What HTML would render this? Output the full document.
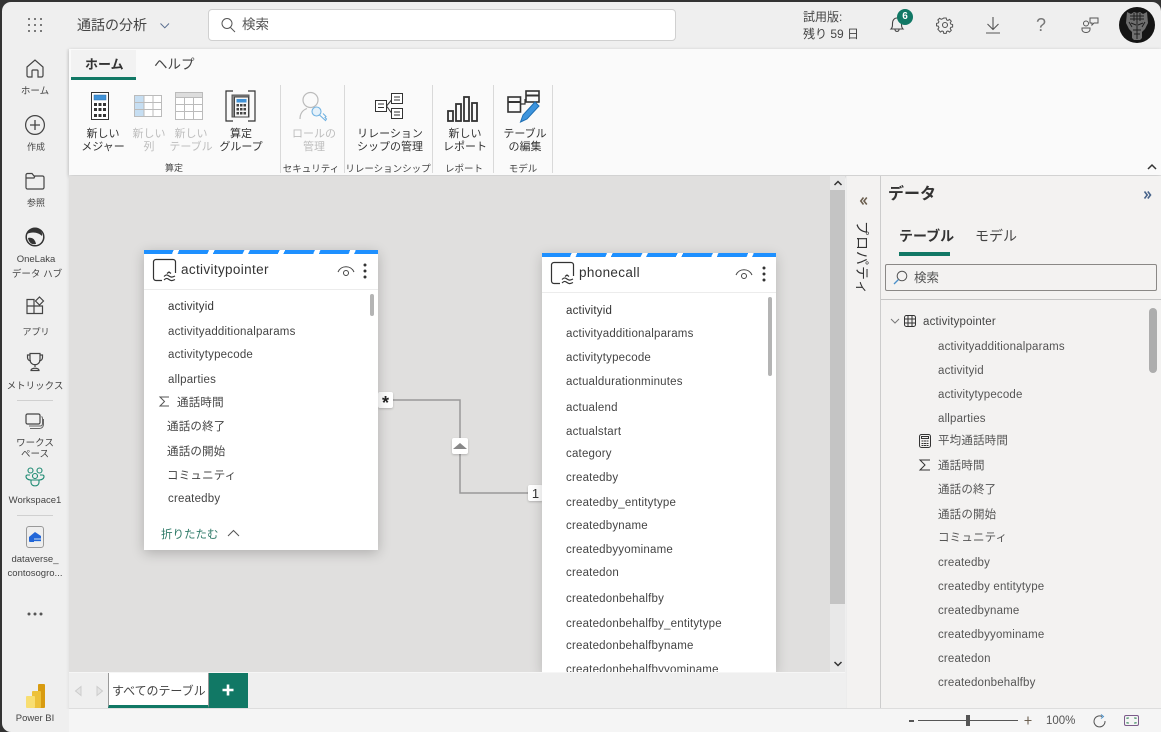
<!DOCTYPE html>
<html lang="ja"><head><meta charset="utf-8"><title>通話の分析</title>
<style>
*{box-sizing:border-box}
html,body{margin:0;padding:0;width:1161px;height:732px;overflow:hidden;background:#333}
body{font-family:"Liberation Sans","Noto Sans CJK JP",sans-serif;color:#333}
.a{position:absolute}
.t{position:absolute;white-space:nowrap;line-height:14px}
.c{text-align:center;transform:translateX(-50%)}
svg{position:absolute;overflow:visible}
#app{position:absolute;left:2px;top:2px;width:1159px;height:730px;background:#efefef;border-radius:9px 9px 0 9px;overflow:hidden}
#root{position:absolute;left:-2px;top:-2px;width:1161px;height:732px}
.nav{font-size:9.5px;color:#444}
.rb{font-size:11px;color:#333;line-height:13px;text-align:center;transform:translateX(-50%);position:absolute;white-space:nowrap}
.dis{color:#bdbdbd}
.grp{font-size:9.5px;color:#444;position:absolute;white-space:nowrap;transform:translateX(-50%)}
.sep{position:absolute;top:85px;height:88px;width:1px;background:#d9d9d9}
.f{position:absolute;white-space:nowrap;font-size:11.5px;line-height:14px;color:#444;letter-spacing:.2px;margin-top:1px}
.d{position:absolute;white-space:nowrap;font-size:11.5px;line-height:14px;color:#555;letter-spacing:.17px;margin-top:1px}
.card{position:absolute;background:#fff;box-shadow:0 3px 12px rgba(0,0,0,.22);overflow:hidden}
.stripe{position:absolute;left:0;right:0;top:0;height:4px;background:repeating-linear-gradient(115deg,#1e90ff 0 27px,#fff 27px 32px)}
</style></head><body>
<div id="app"><div id="root">

<!-- top bar -->
<svg style="left:28px;top:18px" width="16" height="16"><g fill="#555"><circle cx="1" cy="1" r="1"/><circle cx="7" cy="1" r="1"/><circle cx="13" cy="1" r="1"/><circle cx="1" cy="7" r="1"/><circle cx="7" cy="7" r="1"/><circle cx="13" cy="7" r="1"/><circle cx="1" cy="13" r="1"/><circle cx="7" cy="13" r="1"/><circle cx="13" cy="13" r="1"/></g></svg>
<div class="t" style="left:77px;top:18px;font-size:14px;color:#444">通話の分析</div>
<svg style="left:160px;top:23px" width="10" height="6"><path d="M.5.5l4.300 4.300L9 .5" fill="none" stroke="#5a6f90" stroke-width="1"/></svg>
<div class="a" style="left:208px;top:9px;width:468px;height:32px;background:#fff;border:1px solid #d0d0d0;border-radius:4px"></div>
<svg style="left:220px;top:17px" width="16" height="16"><circle cx="7" cy="6.500" r="5" fill="none" stroke="#555" stroke-width="1"/><path d="M10.500 10.500l4.500 4.500" stroke="#555" stroke-width="1"/></svg>
<div class="t" style="left:242px;top:18px;font-size:13.500px;color:#555">検索</div>

<div class="t" style="left:803px;top:10px;font-size:12px;color:#444">試用版:</div>
<div class="t" style="left:803px;top:27px;font-size:12px;color:#444">残り 59 日</div>
<svg style="left:889px;top:16px" width="17" height="18"><path d="M2 13c1.500-1.500 1.500-3 1.500-5.500C3.500 4 5.500 2 8 2s4.500 2 4.500 5.500c0 2.500 0 4 1.500 5.500z M6 13.500c0 2.500 4 2.500 4 0" fill="none" stroke="#444" stroke-width="1.100"/></svg>
<div class="a" style="left:897px;top:9px;width:16px;height:16px;border-radius:50%;background:#117865;color:#fff;font-size:10px;line-height:16px;text-align:center;font-weight:bold">6</div>
<svg style="left:936px;top:16px" width="18" height="18" viewBox="0 0 18 18"><path d="M7.500 1h3l.5 2.300 1.600.7 2-1.300 2.100 2.100-1.300 2 .7 1.600 2.200.5v3l-2.200.5-.7 1.600 1.300 2-2.100 2.100-2-1.300-1.600.7-.5 2.200h-3l-.5-2.200-1.600-.7-2 1.300L.3 14.600l1.300-2-.7-1.600L-1.300 10.500v-3l2.200-.5.700-1.600-1.300-2 2.100-2.100 2 1.300 1.600-.7z" transform="translate(1.600 1.200) scale(.82)" fill="none" stroke="#555" stroke-width="1.250"/><circle cx="9" cy="9" r="2.500" fill="none" stroke="#555" stroke-width="1.100"/></svg>
<svg style="left:985px;top:16px" width="16" height="18"><path d="M8 1v12M2.500 8L8 13.500 13.500 8M1 17h14" fill="none" stroke="#555" stroke-width="1.100"/></svg>
<div class="t" style="left:1036px;top:16px;font-size:18px;line-height:18px;color:#777">?</div>
<svg style="left:1081px;top:16px" width="18" height="18"><circle cx="5" cy="7.500" r="2.500" fill="none" stroke="#555"/><path d="M1 12h8v1.500c0 4-8 4-8 0z" fill="none" stroke="#555"/><path d="M9 2h8v5h-4l-2 2V7H9z" fill="none" stroke="#555"/></svg>
<div class="a" style="left:1119px;top:7px;width:36px;height:36px;border-radius:50%;background:#141414"></div>
<svg style="left:1119px;top:7px" width="36" height="36"><path d="M8 5l4 2 3-2 3 1 3-1 3 2 4-2 1 11-3 6-3 3v6l-2 2h-6l-2-2v-6l-3-3-3-6z" fill="#6f6f6f"/><path d="M11 9h14M11 12h14M18 6v26M12 16l5 2M24 16l-5 2M14 23h8M15 27h6M15 6v8M21 6v8M10 15l3 5M26 15l-3 5" stroke="#1f1f1f" stroke-width="1" fill="none"/></svg>

<!-- left nav -->
<div class="a" style="left:66px;top:49px;width:3px;height:660px;background:linear-gradient(90deg,#efefef,#e4e4e4)"></div>
<svg style="left:25px;top:58px" width="20" height="20"><path d="M2 9l8-7 8 7v8.500a1.500 1.500 0 0 1-1.500 1.500H13v-6a1 1 0 0 0-1-1H8a1 1 0 0 0-1 1v6H3.500A1.500 1.500 0 0 1 2 17.500z" fill="none" stroke="#444" stroke-width="1.200"/></svg>
<div class="t nav c" style="left:35px;top:84px;margin-top:1px">ホーム</div>
<svg style="left:25px;top:115px" width="20" height="20"><circle cx="10" cy="10" r="9.400" fill="none" stroke="#444" stroke-width="1.200"/><path d="M10 5v10M5 10h10" stroke="#444" stroke-width="1.300"/></svg>
<div class="t nav c" style="left:36px;top:140px;font-size:9px">作成</div>
<svg style="left:25px;top:172px" width="20" height="18"><path d="M1 3a1.500 1.500 0 0 1 1.500-1.500H7L9 4h8.500A1.500 1.500 0 0 1 19 5.500v10a1.500 1.500 0 0 1-1.500 1.500h-15A1.500 1.500 0 0 1 1 15.500zM1 6h8l1-2" fill="none" stroke="#444" stroke-width="1.200"/></svg>
<div class="t nav c" style="left:36px;top:196px;font-size:9px">参照</div>
<svg style="left:25px;top:227px" width="20" height="20"><circle cx="10" cy="10" r="8.800" fill="none" stroke="#333" stroke-width="1.500"/><path d="M2 7c2-4 6-6 9-6 4 1 7 5 6 8-3-3-9-5-15-2z" fill="#333"/><path d="M3 11c4-1 7 1 8 6-4 1-7-1-8-6z" fill="#333"/></svg>
<div class="t nav c" style="left:36px;top:253px">OneLaka</div>
<div class="t nav c" style="left:37px;top:268px">データ ハブ</div>
<svg style="left:25px;top:296px" width="20" height="20"><path d="M2 3.500h7v6.500H2zM2 10h7v7.500H2zM9 10h8.500v7.500H9z" fill="none" stroke="#444" stroke-width="1.200"/><path d="M14.500 1l4 4-4 4-4-4z" fill="none" stroke="#444" stroke-width="1.200"/></svg>
<div class="t nav c" style="left:36px;top:325px;font-size:9px">アプリ</div>
<svg style="left:25px;top:352px" width="20" height="20"><path d="M5 1.500h10v6c0 7-10 7-10 0zM5 3H2.500v2.500C2.500 7.500 4 9 6 9M15 3h2.500v2.500C17.500 7.500 16 9 14 9M10 12v3M6 18.500c0-3 8-3 8 0z" fill="none" stroke="#444" stroke-width="1.200"/></svg>
<div class="t nav c" style="left:35px;top:380px">メトリックス</div>
<div class="a" style="left:17px;top:400px;width:36px;height:1px;background:#d0d0d0"></div>
<svg style="left:25px;top:413px" width="20" height="18"><rect x="1" y="1" width="14" height="10" rx="1.500" fill="none" stroke="#444" stroke-width="1.200"/><path d="M16.500 3.500c1 .5 1 1 1 2v5c0 1.500-1 2.500-2.500 2.500H4M18.500 6v5.500c0 2-1.500 4-4 4H5" fill="none" stroke="#666" stroke-width="1"/></svg>
<div class="t nav c" style="left:35px;top:439px;line-height:10.500px;text-align:center">ワークス<br>ペース</div>
<svg style="left:25px;top:467px" width="21" height="20" fill="none" stroke="#1d8a72" stroke-width="1.100"><circle cx="5.500" cy="3.500" r="2.500"/><circle cx="14.500" cy="3.500" r="2.500"/><circle cx="10" cy="9" r="2.500"/><path d="M6 13h8v2.500c0 4.500-8 4.500-8 0zM5 8H2.500A1.500 1.500 0 0 0 1 9.500C1 11.500 3 13 6 13M15 8h2.500A1.500 1.500 0 0 1 19 9.500C19 11.500 17 13 14 13"/></svg>
<div class="t nav c" style="left:35px;top:494px">Workspace1</div>
<div class="a" style="left:17px;top:515px;width:36px;height:1px;background:#d0d0d0"></div>
<div class="a" style="left:26px;top:526px;width:18px;height:22px;border-radius:3px;background:#eee;border:1px solid #999"></div>
<svg style="left:28px;top:531px" width="15" height="14"><path d="M1 6l6-5 6 4v6H2a1 1 0 0 1-1-1z" fill="#2266d8"/><path d="M6 8h7M6 10.500h7" stroke="#cde" stroke-width="1"/></svg>
<div class="t nav c" style="left:35px;top:553px">dataverse_</div>
<div class="t nav c" style="left:35px;top:567px">contosogro...</div>
<svg style="left:27px;top:612px" width="16" height="4"><g fill="#555"><circle cx="2" cy="2" r="1.500"/><circle cx="8" cy="2" r="1.500"/><circle cx="14" cy="2" r="1.500"/></g></svg>
<svg style="left:26px;top:684px" width="19" height="25"><rect x="12" y="0" width="7" height="24" rx="1" fill="#d89b10"/><rect x="6" y="7" width="9" height="17" rx="1" fill="#edc13a"/><rect x="0" y="12" width="9" height="12" rx="1" fill="#f8de72"/></svg>
<div class="t nav c" style="left:35px;top:712px">Power BI</div>

<!-- ribbon -->
<div class="a" style="left:69px;top:49px;width:1092px;height:126px;background:#fafafa;box-shadow:0 1px 4px rgba(0,0,0,.2)"></div>
<div class="a" style="left:71px;top:50px;width:65px;height:30px;background:#f2f2f2"></div>
<div class="t" style="left:85px;top:58px;font-size:13px;font-weight:bold;color:#333">ホーム</div>
<div class="a" style="left:71px;top:77px;width:65px;height:3px;background:#117865"></div>
<div class="t" style="left:154px;top:58px;font-size:13.500px;color:#444">ヘルプ</div>

<svg style="left:91px;top:92px" width="18" height="28"><rect x=".5" y=".5" width="17" height="27" fill="#fff" stroke="#333"/><rect x="3" y="3" width="12" height="5" fill="#3f92d8" stroke="#2d6ca3" stroke-width=".5"/><g fill="#333"><rect x="3" y="11" width="3" height="3"/><rect x="7.500" y="11" width="3" height="3"/><rect x="12" y="11" width="3" height="3"/><rect x="3" y="16" width="3" height="3"/><rect x="7.500" y="16" width="3" height="3"/><rect x="12" y="16" width="3" height="3"/><rect x="3" y="22" width="3" height="3"/><rect x="7.500" y="22" width="3" height="3"/><rect x="12" y="22" width="3" height="3"/></g></svg>
<div class="rb" style="left:103px;top:127px;margin-top:1px">新しい<br>メジャー</div>
<svg style="left:134px;top:95px" width="28" height="22"><rect x=".5" y=".5" width="27" height="21" fill="#fff" stroke="#bbb"/><rect x="1" y="1" width="9" height="20" fill="#c6def2"/><path d="M10 .5v21M19 .5v21M.5 7.500h27M.5 14.500h27" stroke="#bbb"/></svg>
<div class="rb dis" style="left:149px;top:127px;margin-top:1px">新しい<br>列</div>
<svg style="left:175px;top:92px" width="28" height="28"><rect x=".5" y=".5" width="27" height="27" fill="#fff" stroke="#bbb"/><rect x="1" y="1" width="26" height="4" fill="#ddd"/><path d="M9.500 5v22M18.500 5v22M.5 5.500h27M.5 12.500h27M.5 19.500h27" stroke="#bbb"/></svg>
<div class="rb dis" style="left:191px;top:127px;margin-top:1px">新しい<br>テーブル</div>
<svg style="left:225px;top:90px" width="31" height="32"><path d="M8 1H1v30h7M23 1h7v30h-7" fill="none" stroke="#333" stroke-width="1.200"/><rect x="7" y="5" width="17" height="22" fill="#888" stroke="#555"/><rect x="9.500" y="7" width="14" height="20" fill="#f5f5f5" stroke="#444"/><rect x="11.500" y="9" width="10" height="3.500" fill="#3f92d8"/><g fill="#444"><rect x="11.500" y="14" width="2.500" height="2.500"/><rect x="15" y="14" width="2.500" height="2.500"/><rect x="18.500" y="14" width="2.500" height="2.500"/><rect x="11.500" y="18" width="2.500" height="2.500"/><rect x="15" y="18" width="2.500" height="2.500"/><rect x="18.500" y="18" width="2.500" height="2.500"/><rect x="11.500" y="22" width="2.500" height="2.500"/><rect x="15" y="22" width="2.500" height="2.500"/><rect x="18.500" y="22" width="2.500" height="2.500"/></g></svg>
<div class="rb" style="left:241px;top:127px;margin-top:1px">算定<br>グループ</div>
<div class="grp" style="left:174px;top:161px;font-size:9px">算定</div>
<div class="sep" style="left:280px"></div>

<svg style="left:299px;top:91px" width="30" height="30" fill="none"><circle cx="11.500" cy="9" r="7.500" stroke="#bbb" stroke-width="1.200"/><path d="M1 28c0-6 3-9 7-10.500" stroke="#bbb" stroke-width="1.200"/><circle cx="17.500" cy="20.500" r="4.500" fill="#e5f1fa" stroke="#72b3e2" stroke-width="1.100"/><path d="M20.500 24l6 5.500 1-1.500-1.500-1.500 1-1-3-3" stroke="#72b3e2" stroke-width="1.100"/></svg>
<div class="rb dis" style="left:314px;top:127px;margin-top:1px">ロールの<br>管理</div>
<div class="grp" style="left:311px;top:161px">セキュリティ</div>
<div class="sep" style="left:344px"></div>

<svg style="left:375px;top:92px" width="29" height="28" fill="#fff" stroke="#333"><rect x=".5" y="8.500" width="11" height="11"/><rect x="16.500" y="1.500" width="11" height="10"/><rect x="16.500" y="16.500" width="11" height="10"/><path d="M11.500 14l5-6M11.500 14l5 7M3 12h6M3 15.500h6M19 5h6M19 8h6M19 20h6M19 23h6" fill="none"/></svg>
<div class="rb" style="left:390px;top:127px;margin-top:1px">リレーション<br>シップの管理</div>
<div class="grp" style="left:388px;top:161px">リレーションシップ</div>
<div class="sep" style="left:432px"></div>

<svg style="left:447px;top:96px" width="31" height="26" fill="none" stroke="#333" stroke-width="1.800"><rect x="1" y="15" width="5" height="10"/><rect x="9" y="8" width="5" height="17"/><rect x="17" y="1" width="5" height="24"/><rect x="25" y="7" width="5" height="18"/></svg>
<div class="rb" style="left:465px;top:127px;margin-top:1px">新しい<br>レポート</div>
<div class="grp" style="left:464px;top:161px">レポート</div>
<div class="sep" style="left:493px"></div>

<svg style="left:507px;top:90px" width="34" height="33" fill="none"><rect x="1" y="7" width="12.500" height="15" stroke="#333" stroke-width="1.600"/><path d="M1 12h12.500" stroke="#333" stroke-width="2"/><path d="M13.500 14H18V9" stroke="#333" stroke-width="1.200"/><rect x="19" y="1" width="13" height="11" stroke="#333" stroke-width="1.600"/><path d="M19 5.500h13" stroke="#333" stroke-width="2"/><path d="M13.500 32l2.500-7 12-13 4 4-12 13z" fill="#3d94dd" stroke="#1f6fb3"/></svg>
<div class="rb" style="left:525px;top:127px;margin-top:1px">テーブル<br>の編集</div>
<div class="grp" style="left:523px;top:161px">モデル</div>
<div class="sep" style="left:552px"></div>
<svg style="left:1147px;top:163px" width="10" height="7"><path d="M1 6l4-4 4 4" fill="none" stroke="#333" stroke-width="1.500"/></svg>

<!-- canvas -->
<div class="a" style="left:69px;top:176px;width:761px;height:496px;background:#e0dfde"></div>
<div class="a" style="left:830px;top:176px;width:15px;height:496px;background:#e8e8e8"></div>
<div class="a" style="left:830px;top:190px;width:15px;height:414px;background:#c4c4c4"></div>
<svg style="left:834px;top:180px" width="8" height="6"><path d="M.5 5L4 1.500 7.500 5" fill="none" stroke="#333" stroke-width="1.500"/></svg>
<svg style="left:834px;top:661px" width="8" height="6"><path d="M.5 1L4 4.500 7.500 1" fill="none" stroke="#333" stroke-width="1.500"/></svg>

<!-- relationship -->
<svg style="left:0;top:0" width="1161" height="732"><path d="M392 400h68v93h70" fill="none" stroke="#999" stroke-width="1.500"/></svg>
<div class="a" style="left:378px;top:392px;width:15px;height:16px;background:#fff;border-radius:2px;box-shadow:0 1px 2px rgba(0,0,0,.2);font-size:18px;line-height:22px;text-align:center;color:#222;font-weight:bold">*</div>
<div class="a" style="left:452px;top:438px;width:16px;height:16px;background:#fff;border-radius:2px;box-shadow:0 1px 2px rgba(0,0,0,.2)"></div>
<svg style="left:453px;top:443px" width="14" height="7"><path d="M7 0l7 6H0z" fill="#888"/></svg>
<div class="a" style="left:528px;top:485px;width:15px;height:16px;background:#fff;border-radius:2px;box-shadow:0 1px 2px rgba(0,0,0,.2);font-size:13px;line-height:17px;text-align:center;color:#333">1</div>

<!-- card 1 -->
<div class="card" style="left:144px;top:250px;width:234px;height:300px">
<div class="stripe"></div>
<div class="a" style="left:0;top:39px;width:234px;height:1px;background:#ececec"></div>
<svg style="left:9px;top:9px" width="24" height="23" fill="none" stroke="#333" stroke-width="1.200"><path d="M9 21.500H3A2.500 2.500 0 0 1 .5 19V3A2.500 2.500 0 0 1 3 .5h17A2.500 2.500 0 0 1 22.500 3v11"/><path d="M11 17.500c2-2 3-2 5-.5s3 1.500 6 0M11 21c2-2 3-2 5-.5s3 1.500 6 0M14 14.500l2-1.500 2 1.500"/></svg>
<div class="t" style="left:37px;top:12px;font-size:13.500px;line-height:16px;color:#333;letter-spacing:.35px">activitypointer</div>
<svg style="left:193px;top:15px" width="18" height="12" fill="none" stroke="#444"><path d="M1 7c3-7 13-7 16 0" stroke-width="1"/><circle cx="9" cy="8" r="2.500"/></svg>
<svg style="left:219px;top:13px" width="4" height="16" fill="#333"><circle cx="2" cy="2" r="1.500"/><circle cx="2" cy="8" r="1.500"/><circle cx="2" cy="14" r="1.500"/></svg>
<div class="a" style="left:226px;top:44px;width:4px;height:22px;background:#b4b4b4;border-radius:2px"></div>
<div class="f" style="left:24px;top:49px;color:#333">activityid</div>
<div class="f" style="left:24px;top:74px">activityadditionalparams</div>
<div class="f" style="left:24px;top:97px">activitytypecode</div>
<div class="f" style="left:24px;top:122px">allparties</div>
<svg style="left:15px;top:146px" width="11" height="11" fill="none" stroke="#555"><path d="M10 1H1l4.500 4.500L1 10h9"/></svg>
<div class="f" style="left:33px;top:145px">通話時間</div>
<div class="f" style="left:23px;top:169px">通話の終了</div>
<div class="f" style="left:23px;top:194px">通話の開始</div>
<div class="f" style="left:23px;top:218px">コミュニティ</div>
<div class="f" style="left:24px;top:241px">createdby</div>
<div class="t" style="left:17px;top:278px;font-size:11.500px;color:#2f7a68">折りたたむ</div>
<svg style="left:83px;top:279px" width="13" height="8"><path d="M1 7l5.500-5.500L12 7" fill="none" stroke="#555"/></svg>
</div>

<!-- card 2 -->
<div class="card" style="left:542px;top:253px;width:234px;height:419px;box-shadow:0 3px 12px rgba(0,0,0,.18)">
<div class="stripe"></div>
<div class="a" style="left:0;top:39px;width:234px;height:1px;background:#ececec"></div>
<svg style="left:9px;top:9px" width="24" height="23" fill="none" stroke="#333" stroke-width="1.200"><path d="M9 21.500H3A2.500 2.500 0 0 1 .5 19V3A2.500 2.500 0 0 1 3 .5h17A2.500 2.500 0 0 1 22.500 3v11"/><path d="M11 17.500c2-2 3-2 5-.5s3 1.500 6 0M11 21c2-2 3-2 5-.5s3 1.500 6 0M14 14.500l2-1.500 2 1.500"/></svg>
<div class="t" style="left:37px;top:12px;font-size:13.500px;line-height:16px;color:#333;letter-spacing:.35px">phonecall</div>
<svg style="left:193px;top:15px" width="18" height="12" fill="none" stroke="#444"><path d="M1 7c3-7 13-7 16 0" stroke-width="1"/><circle cx="9" cy="8" r="2.500"/></svg>
<svg style="left:220px;top:13px" width="4" height="16" fill="#333"><circle cx="2" cy="2" r="1.500"/><circle cx="2" cy="8" r="1.500"/><circle cx="2" cy="14" r="1.500"/></svg>
<div class="a" style="left:226px;top:44px;width:4px;height:79px;background:#b4b4b4;border-radius:2px"></div>
<div class="f" style="left:24px;top:50px;color:#333">activityid</div>
<div class="f" style="left:24px;top:73px">activityadditionalparams</div>
<div class="f" style="left:24px;top:97px">activitytypecode</div>
<div class="f" style="left:24px;top:121px">actualdurationminutes</div>
<div class="f" style="left:24px;top:147px">actualend</div>
<div class="f" style="left:24px;top:171px">actualstart</div>
<div class="f" style="left:24px;top:193px">category</div>
<div class="f" style="left:24px;top:217px">createdby</div>
<div class="f" style="left:24px;top:242px">createdby_entitytype</div>
<div class="f" style="left:24px;top:265px">createdbyname</div>
<div class="f" style="left:24px;top:289px">createdbyyominame</div>
<div class="f" style="left:24px;top:312px">createdon</div>
<div class="f" style="left:24px;top:338px">createdonbehalfby</div>
<div class="f" style="left:24px;top:363px">createdonbehalfby_entitytype</div>
<div class="f" style="left:24px;top:385px">createdonbehalfbyname</div>
<div class="f" style="left:24px;top:409px">createdonbehalfbyyominame</div>
</div>

<!-- tabs -->
<div class="a" style="left:69px;top:672px;width:776px;height:36px;background:#efefef;border-top:1px solid #f6f6f6"></div>
<svg style="left:75px;top:686px" width="7" height="10"><path d="M6 .5v9L.5 5z" fill="#e4e4e4" stroke="#ccc"/></svg>
<svg style="left:96px;top:686px" width="7" height="10"><path d="M1 .5v9L6.500 5z" fill="#e4e4e4" stroke="#ccc"/></svg>
<div class="a" style="left:108px;top:673px;width:101px;height:35px;background:#fff;border-left:1px solid #999;border-right:1px solid #999;border-bottom:3px solid #117865"></div>
<div class="t" style="left:112px;top:684px;font-size:12px;letter-spacing:-.05px;color:#444">すべてのテーブル</div>
<div class="a" style="left:209px;top:673px;width:39px;height:35px;background:#117865"></div>
<svg style="left:222px;top:684px" width="12" height="12"><path d="M6 .5v11M.5 6h11" stroke="#fff" stroke-width="2.600"/></svg>

<!-- properties panel -->
<div class="a" style="left:846px;top:176px;width:35px;height:532px;background:#f3f2f1;border-left:1px solid #ececec;border-right:1px solid #ccc"></div>
<svg style="left:860px;top:197px" width="7" height="8" fill="none" stroke="#6b5f50" stroke-width="1.600"><path d="M3.500 .5L.8 4l2.700 3.500M6.800 .5L4 4l2.800 3.500"/></svg>
<div class="t" style="left:854px;top:221px;font-size:14px;line-height:15px;letter-spacing:1px;color:#333;writing-mode:vertical-rl;text-orientation:sideways">プロパティ</div>

<!-- data panel -->
<div class="a" style="left:881px;top:176px;width:280px;height:532px;background:#f3f2f1"></div>
<div class="t" style="left:888px;top:186px;font-size:16px;line-height:18px;font-weight:bold;color:#333">データ</div>
<svg style="left:1144px;top:191px" width="7" height="8" fill="none" stroke="#47638a" stroke-width="1.600"><path d="M.5 .5L3.200 4 .5 7.500M3.800 .5L6.500 4 3.800 7.500"/></svg>
<div class="t" style="left:899px;top:228px;font-size:14px;line-height:16px;font-weight:bold;color:#333">テーブル</div>
<div class="t" style="left:975px;top:228px;font-size:14px;line-height:16px;color:#444">モデル</div>
<div class="a" style="left:899px;top:252px;width:51px;height:4px;background:#117865"></div>
<div class="a" style="left:885px;top:264px;width:272px;height:27px;border:1px solid #8a8886;border-radius:2px"></div>
<svg style="left:893px;top:270px" width="15" height="15" fill="none"><circle cx="9" cy="6" r="4.800" stroke="#555"/><path d="M5.500 9.500L1 14" stroke="#4a90c9" stroke-width="1.300"/></svg>
<div class="t" style="left:914px;top:271px;font-size:12.500px;color:#555">検索</div>
<div class="a" style="left:881px;top:299px;width:280px;height:1px;background:#c4c4c4"></div>
<div class="a" style="left:1149px;top:308px;width:8px;height:65px;border-radius:4px;background:#adadad"></div>
<svg style="left:890px;top:318px" width="10" height="6"><path d="M1 1l4 4 4-4" fill="none" stroke="#777"/></svg>
<svg style="left:904px;top:315px" width="12" height="12" fill="none" stroke="#333"><rect x=".5" y=".5" width="11" height="11" rx="2"/><path d="M4 .5v11M8 .5v11M.5 4h11M.5 8h11"/></svg>
<div class="d" style="left:923px;top:314px;color:#444">activitypointer</div>
<div class="d" style="left:938px;top:339px">activityadditionalparams</div>
<div class="d" style="left:938px;top:363px">activityid</div>
<div class="d" style="left:938px;top:387px">activitytypecode</div>
<div class="d" style="left:938px;top:411px">allparties</div>
<svg style="left:919px;top:434px" width="12" height="14" fill="none" stroke="#333"><rect x=".5" y=".5" width="11" height="13" rx="2"/><rect x="2.500" y="2.500" width="7" height="2"/><path d="M2.500 7h2M5 7h2M7.500 7h2M2.500 9.500h2M5 9.500h2M7.500 9.500h2M2.500 11.500h2M5 11.500h2M7.500 11.500h2"/></svg>
<div class="d" style="left:938px;top:433px">平均通話時間</div>
<svg style="left:919px;top:459px" width="12" height="12" fill="none" stroke="#333"><path d="M11 1H1l5 5-5 5h10"/></svg>
<div class="d" style="left:938px;top:458px">通話時間</div>
<div class="d" style="left:938px;top:482px">通話の終了</div>
<div class="d" style="left:938px;top:507px">通話の開始</div>
<div class="d" style="left:938px;top:530px">コミュニティ</div>
<div class="d" style="left:938px;top:555px">createdby</div>
<div class="d" style="left:938px;top:579px">createdby entitytype</div>
<div class="d" style="left:938px;top:603px">createdbyname</div>
<div class="d" style="left:938px;top:627px">createdbyyominame</div>
<div class="d" style="left:938px;top:651px">createdon</div>
<div class="d" style="left:938px;top:675px">createdonbehalfby</div>

<!-- status bar -->
<div class="a" style="left:69px;top:708px;width:1092px;height:24px;background:#f5f5f5;border-top:1px solid #ddd"></div>
<div class="a" style="left:909px;top:720px;width:5px;height:2px;background:#555"></div>
<div class="a" style="left:918px;top:720px;width:100px;height:1px;background:#555"></div>
<div class="a" style="left:966px;top:715px;width:4px;height:11px;background:#555"></div>
<svg style="left:1024px;top:716px" width="8" height="9"><path d="M4 .5v8M.5 4.500h7" stroke="#6b5f50" stroke-width="1.100"/></svg>
<div class="t" style="left:1046px;top:714px;font-size:11.500px;color:#555">100%</div>
<svg style="left:1093px;top:714px" width="13" height="14" fill="none" stroke="#555"><path d="M9 2.500A5.500 5.500 0 1 0 12 7"/><path d="M8 .5l2.500 2L8 4.500" stroke="#4a90c9"/></svg>
<svg style="left:1124px;top:715px" width="15" height="11" fill="none"><rect x=".5" y=".5" width="14" height="10" rx="1.500" stroke="#7b5b8a"/><path d="M3 4V3h2M10 3h2v1M3 7v1h2M10 8h2V7" stroke="#3d8a60"/></svg>
</div></div>
</body></html>
